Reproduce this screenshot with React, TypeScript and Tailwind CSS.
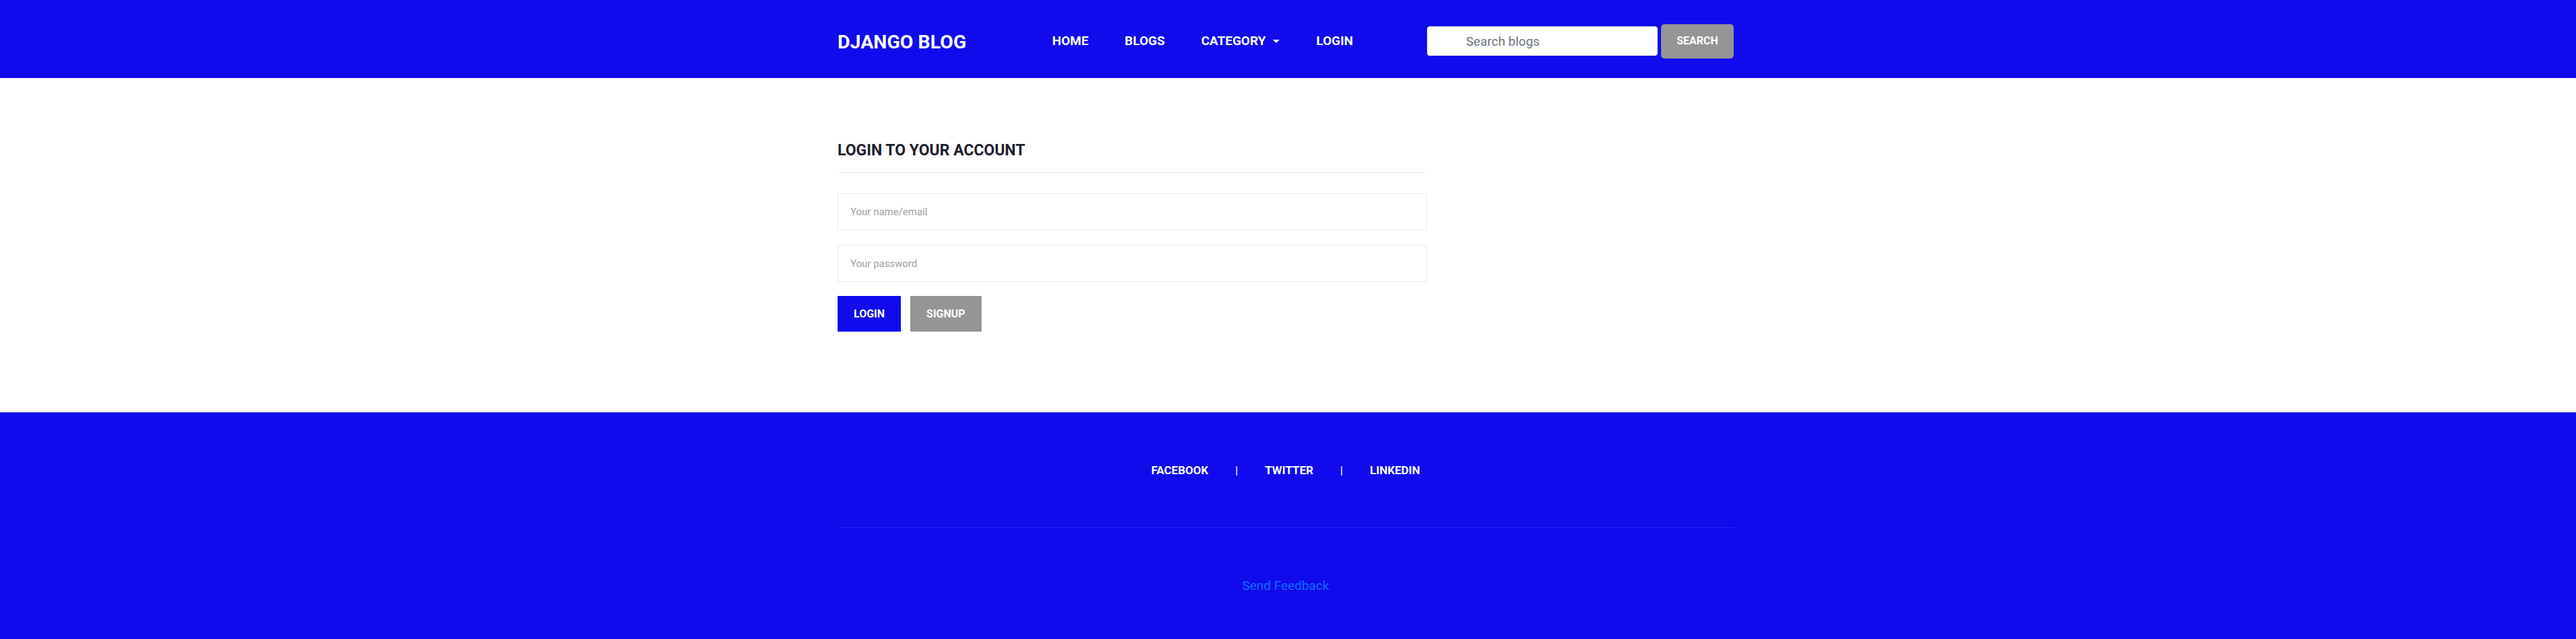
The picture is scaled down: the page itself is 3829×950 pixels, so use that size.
const navLinks = ["HOME", "BLOGS", "CATEGORY", "LOGIN"];
const socialLinks = ["FACEBOOK", "TWITTER", "LINKEDIN"];

const Header = () => {
  return (
    <header className="bg-[#110aed] h-[116px] pt-[6px]">
      <div className="mx-auto w-[1339px] pr-[7px] h-full flex items-center">
        <a href="#" className="w-[319px] mt-[3px] text-[28.5px] leading-[34px] font-bold text-white">
          DJANGO BLOG
        </a>
        <ul className="flex items-center gap-[54px]">
          {navLinks.map((link) => (
            <li key={link}>
              <a href="#" className="flex items-center text-[19px] leading-[22px] font-bold text-white">
                {link}
                {link === "CATEGORY" && (
                  <span className="ml-[11px] w-0 h-0 border-t-[5px] border-t-white border-x-[5px] border-x-transparent" />
                )}
              </a>
            </li>
          ))}
        </ul>
        <form className="ml-auto flex items-center gap-[5px]" onSubmit={(e) => e.preventDefault()}>
          <input
            type="text"
            placeholder="Search blogs"
            className="w-[343px] h-[44px] rounded-[4px] border border-[#cfd4e6] bg-white pl-[57px] pr-3 text-[19px] text-[#333] placeholder:text-[#6c757d] focus:outline-none"
          />
          <button
            type="submit"
            className="w-[108px] h-[51px] rounded-[5px] bg-[#959595] text-[16px] font-bold text-white"
          >
            SEARCH
          </button>
        </form>
      </div>
    </header>
  );
};

const LoginForm = () => {
  return (
    <section className="bg-white pt-[95px] pb-[120px]">
      <div className="mx-auto w-[1339px] pr-[7px]">
        <div className="w-[876px]">
          <h2 className="text-[23px] leading-[26px] font-bold text-[#1d1d2c]">
            LOGIN TO YOUR ACCOUNT
          </h2>
          <div className="mt-[19px] border-t border-[#ececec]" />
          <form className="mt-[30px] flex flex-col" onSubmit={(e) => e.preventDefault()}>
            <input
              type="text"
              placeholder="Your name/email"
              className="h-[55px] border border-[#e8e8e8] px-[18px] text-[15px] text-[#333] placeholder:text-[#a0a0a0] focus:outline-none"
            />
            <input
              type="password"
              placeholder="Your password"
              className="mt-[22px] h-[55px] border border-[#e8e8e8] px-[18px] text-[15px] text-[#333] placeholder:text-[#a0a0a0] focus:outline-none"
            />
            <div className="mt-[21px] flex gap-[14px]">
              <button type="submit" className="h-[53px] px-6 bg-[#110aed] text-[16px] font-bold text-white">
                LOGIN
              </button>
              <button type="button" className="h-[53px] px-6 bg-[#959595] text-[16px] font-bold text-white">
                SIGNUP
              </button>
            </div>
          </form>
        </div>
      </div>
    </section>
  );
};

const Footer = () => {
  return (
    <footer className="bg-[#110aed] pt-[76px] pb-[80px]">
      <div className="mx-auto w-[1339px] pr-[7px]">
        <div className="flex justify-center items-center text-[17px] leading-[20px] text-white">
          {socialLinks.map((link, i) => (
            <div key={link} className="flex items-center">
              {i > 0 && <span className="mx-[40px] font-normal">|</span>}
              <a href="#" className="font-bold">
                {link}
              </a>
            </div>
          ))}
        </div>
        <div className="mt-[75px] border-t border-white/10" />
        <div className="mt-[74px] text-center">
          <a href="#" className="text-[19px] leading-[23px] text-[#0d6efd]">
            Send Feedback
          </a>
        </div>
      </div>
    </footer>
  );
};

export default function App() {
  return (
    <div className="min-h-screen bg-white font-['Roboto',sans-serif]">
      <Header />
      <LoginForm />
      <Footer />
    </div>
  );
}
